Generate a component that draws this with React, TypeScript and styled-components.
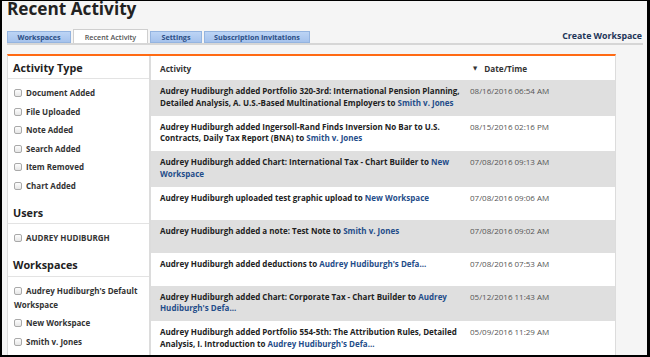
import React from "react";
import styled, { createGlobalStyle } from "styled-components";

const Global = createGlobalStyle`
  html, body { margin: 0; padding: 0; background: #f5f5f5; }
  * { box-sizing: border-box; }
`;

const Frame = styled.div`
  width: 650px;
  height: 357px;
  overflow: hidden;
  border-style: solid;
  border-color: #000;
  border-width: 1px 3px 2px 2px;
  background: #f5f5f5;
  padding: 0 4px 0 5px;
  display: flex;
  flex-direction: column;
  font-family: "Open Sans", "DejaVu Sans", sans-serif;
  color: #222;
`;

const Title = styled.h1`
  margin: -2px 0 0 0;
  font-size: 17.2px;
  line-height: 20px;
  font-weight: 700;
  color: #222;
`;

const TabBar = styled.div`
  margin-top: 10px;
  display: flex;
  align-items: flex-end;
  gap: 2px;
  border-bottom: 2px solid #d6d6d6;
`;

const Tab = styled.div<{ $active?: boolean; $w: number }>`
  width: ${(p) => p.$w}px;
  height: ${(p) => (p.$active ? "14px" : "12px")};
  display: flex;
  align-items: center;
  justify-content: center;
  font-size: ${(p) => (p.$active ? "7.2px" : "7.2px")};
  font-weight: ${(p) => (p.$active ? 600 : 700)};
  color: ${(p) => (p.$active ? "#555" : "#2c4f86")};
  background: ${(p) => (p.$active ? "#fff" : "linear-gradient(#bcd4f5, #a5c2ec)")};
  border: 1px solid ${(p) => (p.$active ? "#cfcfcf" : "#94b4e0")};
  border-bottom: ${(p) => (p.$active ? "none" : "1px solid #94b4e0")};
  white-space: nowrap;
`;

const CreateLink = styled.a`
  margin-left: auto;
  align-self: center;
  font-size: 8.8px;
  font-weight: 700;
  color: #1d3559;
  text-decoration: none;
  padding: 0 1px 1px 0;
`;

const Content = styled.div`
  margin-top: 9px;
  margin-right: 27px;
  flex: 1;
  display: flex;
  border-top: 2px solid #ff6a13;
  border-left: 1px solid #dcdcdc;
  border-right: 1px solid #dcdcdc;
  min-height: 0;
`;

const Sidebar = styled.div`
  width: 143px;
  background: #fff;
  border-right: 2px solid #dcdcdc;
`;

const SectionHeader = styled.div`
  height: 23px;
  display: flex;
  align-items: center;
  padding: 0 5px;
  font-size: 10.8px;
  font-weight: 700;
  color: #222;
  border-bottom: 1px solid #e3e3e3;
`;

const FilterList = styled.div`
  padding: 5px 0 6px;
`;

const FilterItem = styled.label`
  display: block;
  padding: 2.25px 6px;
  line-height: 14px;
  font-size: 8px;
  font-weight: 700;
  color: #333;
`;

const Box = styled.span`
  display: inline-block;
  width: 8px;
  height: 8px;
  margin-right: 4px;
  vertical-align: -1px;
  border: 1px solid #a9a9a9;
  border-radius: 2px;
  background: linear-gradient(#fdfdfd, #e6e6e6);
`;

const Main = styled.div`
  flex: 1;
  background: #fff;
  display: flex;
  flex-direction: column;
`;

const Grid = styled.div`
  display: grid;
  grid-template-columns: 312px 1fr;
`;

const HeadCell = styled.div<{ $pl?: number }>`
  height: 24px;
  display: flex;
  align-items: center;
  padding-left: ${(p) => p.$pl ?? 9}px;
  font-size: 8.2px;
  font-weight: 700;
  color: #333;
  background: #fff;
`;

const Arrow = styled.span`
  font-size: 5.5px;
  margin-right: 7px;
  color: #333;
`;

const Cell = styled.div<{ $shade: boolean }>`
  background: ${(p) => (p.$shade ? "#dfdfdf" : "#fff")};
  padding: 5px 3px 7.5px 9px;
  min-height: 33px;
  font-size: 8px;
  line-height: 11.5px;
  font-weight: 700;
  color: #222;
`;

const DateCell = styled(Cell)`
  padding-left: 7px;
  font-weight: 400;
  font-size: 8px;
  color: #555;
`;

const Link = styled.a`
  color: #1f4d8a;
  text-decoration: none;
`;

const tabs = [
  { label: "Workspaces", w: 64 },
  { label: "Recent Activity", w: 75, active: true },
  { label: "Settings", w: 52 },
  { label: "Subscription Invitations", w: 106 },
];

const activityTypes = [
  "Document Added",
  "File Uploaded",
  "Note Added",
  "Search Added",
  "Item Removed",
  "Chart Added",
];

const workspaces = [
  "Audrey Hudiburgh's Default Workspace",
  "New Workspace",
  "Smith v. Jones",
];

const rows: { text: string; link: string; date: string }[] = [
  {
    text: "Audrey Hudiburgh added Portfolio 320-3rd: International Pension Planning, Detailed Analysis, A. U.S.-Based Multinational Employers to ",
    link: "Smith v. Jones",
    date: "08/16/2016 06:54 AM",
  },
  {
    text: "Audrey Hudiburgh added Ingersoll-Rand Finds Inversion No Bar to U.S. Contracts, Daily Tax Report (BNA) to ",
    link: "Smith v. Jones",
    date: "08/15/2016 02:16 PM",
  },
  {
    text: "Audrey Hudiburgh added Chart: International Tax - Chart Builder to ",
    link: "New Workspace",
    date: "07/08/2016 09:13 AM",
  },
  {
    text: "Audrey Hudiburgh uploaded test graphic upload to ",
    link: "New Workspace",
    date: "07/08/2016 09:06 AM",
  },
  {
    text: "Audrey Hudiburgh added a note: Test Note to ",
    link: "Smith v. Jones",
    date: "07/08/2016 09:02 AM",
  },
  {
    text: "Audrey Hudiburgh added deductions to ",
    link: "Audrey Hudiburgh's Defa...",
    date: "07/08/2016 07:53 AM",
  },
  {
    text: "Audrey Hudiburgh added Chart: Corporate Tax - Chart Builder to ",
    link: "Audrey Hudiburgh's Defa...",
    date: "05/12/2016 11:43 AM",
  },
  {
    text: "Audrey Hudiburgh added Portfolio 554-5th: The Attribution Rules, Detailed Analysis, I. Introduction to ",
    link: "Audrey Hudiburgh's Defa...",
    date: "05/09/2016 11:29 AM",
  },
];

export default function App() {
  return (
    <>
      <Global />
      <Frame>
        <Title>Recent Activity</Title>
        <TabBar>
          {tabs.map((t) => (
            <Tab key={t.label} $w={t.w} $active={t.active}>
              {t.label}
            </Tab>
          ))}
          <CreateLink href="#">Create Workspace</CreateLink>
        </TabBar>
        <Content>
          <Sidebar>
            <SectionHeader>Activity Type</SectionHeader>
            <FilterList>
              {activityTypes.map((t) => (
                <FilterItem key={t}>
                  <Box />
                  {t}
                </FilterItem>
              ))}
            </FilterList>
            <SectionHeader>Users</SectionHeader>
            <FilterList>
              <FilterItem>
                <Box />
                AUDREY HUDIBURGH
              </FilterItem>
            </FilterList>
            <SectionHeader>Workspaces</SectionHeader>
            <FilterList>
              {workspaces.map((t) => (
                <FilterItem key={t}>
                  <Box />
                  {t}
                </FilterItem>
              ))}
            </FilterList>
          </Sidebar>
          <Main>
            <Grid>
              <HeadCell>Activity</HeadCell>
              <HeadCell $pl={10}>
                <Arrow>▼</Arrow>Date/Time
              </HeadCell>
              {rows.map((r, i) => (
                <React.Fragment key={i}>
                  <Cell $shade={i % 2 === 0}>
                    {r.text}
                    <Link href="#">{r.link}</Link>
                  </Cell>
                  <DateCell $shade={i % 2 === 0}>{r.date}</DateCell>
                </React.Fragment>
              ))}
            </Grid>
          </Main>
        </Content>
      </Frame>
    </>
  );
}
